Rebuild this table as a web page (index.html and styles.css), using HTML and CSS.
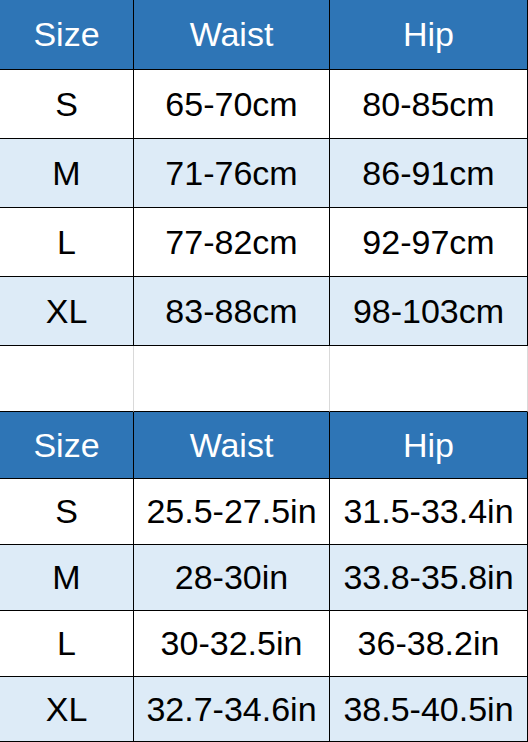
FILE: index.html
```html
<!DOCTYPE html>
<html>
<head>
<meta charset="utf-8">
<link rel="stylesheet" href="styles.css">
</head>
<body>
<div class="chart">
  <div class="cell head h1">Size</div><div class="cell head h1">Waist</div><div class="cell head h1">Hip</div>
  <div class="cell r1">S</div><div class="cell r1">65-70cm</div><div class="cell r1">80-85cm</div>
  <div class="cell r1 alt">M</div><div class="cell r1 alt">71-76cm</div><div class="cell r1 alt">86-91cm</div>
  <div class="cell r1">L</div><div class="cell r1">77-82cm</div><div class="cell r1">92-97cm</div>
  <div class="cell r1 alt">XL</div><div class="cell r1 alt">83-88cm</div><div class="cell r1 alt">98-103cm</div>
  <div class="cell spacer"></div><div class="cell spacer"></div><div class="cell spacer"></div>
  <div class="cell head h2">Size</div><div class="cell head h2">Waist</div><div class="cell head h2">Hip</div>
  <div class="cell r2">S</div><div class="cell r2">25.5-27.5in</div><div class="cell r2">31.5-33.4in</div>
  <div class="cell r2 alt">M</div><div class="cell r2 alt">28-30in</div><div class="cell r2 alt">33.8-35.8in</div>
  <div class="cell r2">L</div><div class="cell r2">30-32.5in</div><div class="cell r2">36-38.2in</div>
  <div class="cell r2 alt last">XL</div><div class="cell r2 alt last">32.7-34.6in</div><div class="cell r2 alt last">38.5-40.5in</div>
</div>
</body>
</html>
```
FILE: styles.css
```css
html, body {
  margin: 0;
  padding: 0;
  background: #ffffff;
}
.chart {
  display: grid;
  grid-template-columns: 134px 196px 198px;
  width: 528px;
  font-family: "Liberation Sans", Arial, sans-serif;
  font-size: 34px;
  color: #000;
}
.cell {
  box-sizing: border-box;
  display: flex;
  align-items: center;
  justify-content: center;
  border-right: 1px solid #000;
  border-bottom: 1px solid #000;
  background: #fff;
  white-space: nowrap;
}
.head {
  background: #2e75b6;
  color: #fff;
}
.h1 { height: 70px; }
.r1 { height: 69px; }
.spacer {
  height: 66px;
  border-right-color: #d9d9d9;
}
.h2 { height: 67px; }
.r2 { height: 66px; }
.r2.last { height: 65px; }
.alt { background: #ddebf7; }
```
